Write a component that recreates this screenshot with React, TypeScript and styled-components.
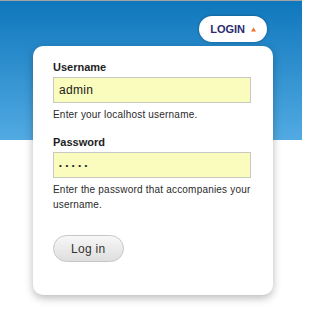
import React from 'react';
import styled, { createGlobalStyle } from 'styled-components';

const GlobalStyle = createGlobalStyle`
    html, body {
        margin: 0;
        padding: 0;
        background: #fff;
    }
    body {
        font-family: 'Liberation Sans', Arial, sans-serif;
    }
`;

const Page = styled.div`
    width: 302px;
    height: 313px;
    border-top: 1px solid #a3a3a3;
    box-sizing: border-box;
    background: linear-gradient(#0f77bc, #52aae2) no-repeat;
    background-size: 100% 139px;
    padding-top: 15px;
    overflow: hidden;
`;

const TopBar = styled.div`
    display: flex;
    justify-content: flex-end;
    padding-right: 35px;
`;

const LoginToggle = styled.button`
    display: flex;
    align-items: center;
    gap: 6px;
    height: 26px;
    padding: 0 11px;
    border: none;
    border-radius: 13px;
    background: #fff;
    box-shadow: 0 0 3px rgba(0, 0, 0, 0.35);
    font-family: 'Liberation Sans', Arial, sans-serif;
    font-size: 11px;
    font-weight: bold;
    color: #2b2a6d;
    cursor: pointer;
`;

const Panel = styled.form`
    width: 240px;
    box-sizing: border-box;
    margin: 4px 0 0 33px;
    padding: 14px 18px 33px 20px;
    background: #fff;
    border-radius: 10px;
    box-shadow: 0 3px 9px rgba(0, 0, 0, 0.28);
`;

const Field = styled.div<{ $last?: boolean }>`
    margin-bottom: ${(p) => (p.$last ? '23px' : '13px')};
`;

const Label = styled.label`
    display: block;
    font-size: 11px;
    line-height: 14px;
    font-weight: bold;
    color: #1e1e1e;
    margin-bottom: 3px;
`;

const Input = styled.input<{ $masked?: boolean }>`
    display: block;
    width: 198px;
    height: 26px;
    box-sizing: border-box;
    border: 1px solid #c9c9c4;
    background: #f9fcbc;
    padding: 0 5px;
    font-family: 'Liberation Sans', Arial, sans-serif;
    font-size: ${(p) => (p.$masked ? '8px' : '12px')};
    letter-spacing: ${(p) => (p.$masked ? '3.6px' : '0.3px')};
    color: #1a1a1a;
    outline: none;
`;

const Hint = styled.div`
    margin-top: 4px;
    font-size: 10px;
    line-height: 15px;
    letter-spacing: 0.2px;
    color: #2a2a2a;
`;

const Submit = styled.button`
    height: 27px;
    padding: 0 17px;
    border: 1px solid #c6c6c6;
    border-radius: 14px;
    background: linear-gradient(#f7f7f7, #dedede);
    font-family: 'Liberation Sans', Arial, sans-serif;
    font-size: 12px;
    letter-spacing: 0.3px;
    color: #333;
    cursor: pointer;
`;

const Caret = () => (
    <svg width="5" height="5" viewBox="0 0 5 5">
        <path d="M2.5 0.5 L5 4.5 L0 4.5 Z" fill="#f26b2a" />
    </svg>
);

const App: React.FC = () => {
    return (
        <>
            <GlobalStyle />
            <Page>
                <TopBar>
                    <LoginToggle type="button">
                        LOGIN
                        <Caret />
                    </LoginToggle>
                </TopBar>
                <Panel onSubmit={(e) => e.preventDefault()}>
                    <Field>
                        <Label htmlFor="user">Username</Label>
                        <Input id="user" type="text" defaultValue="admin" />
                        <Hint>Enter your localhost username.</Hint>
                    </Field>
                    <Field $last>
                        <Label htmlFor="pass">Password</Label>
                        <Input id="pass" type="password" defaultValue="admin" $masked />
                        <Hint>Enter the password that accompanies your username.</Hint>
                    </Field>
                    <Submit type="submit">Log in</Submit>
                </Panel>
            </Page>
        </>
    );
};

export default App;
